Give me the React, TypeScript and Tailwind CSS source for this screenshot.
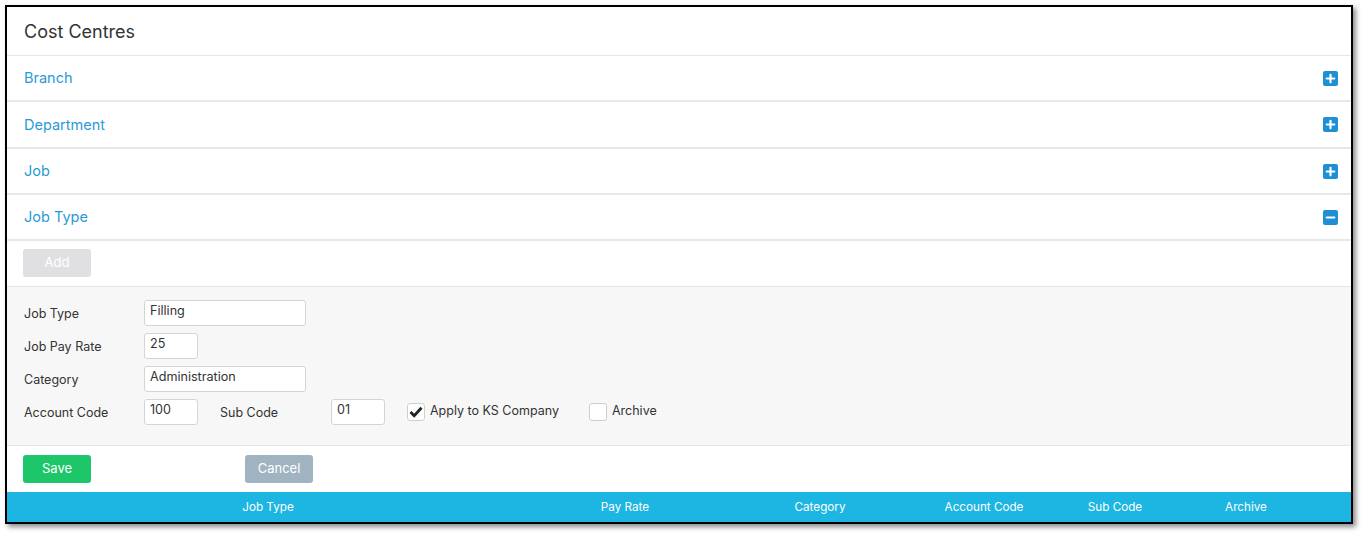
import { Plus, Minus } from 'lucide-react';

const sections = [
  { name: 'Branch', open: false, h: 'h-[46px]' },
  { name: 'Department', open: false, h: 'h-[47px]' },
  { name: 'Job', open: false, h: 'h-[46px]' },
  { name: 'Job Type', open: true, h: 'h-[46px]' },
];

const columns = [
  { label: 'Job Type', w: 'w-[522px]' },
  { label: 'Pay Rate', w: 'w-[192px]' },
  { label: 'Category', w: 'w-[198px]' },
  { label: 'Account Code', w: 'w-[130px]' },
  { label: 'Sub Code', w: 'w-[132px]' },
  { label: 'Archive', w: 'w-[130px]' },
];

function ToggleIcon({ open }: { open: boolean }) {
  return (
    <span className="flex h-[15px] w-[15px] items-center justify-center rounded-[2px] bg-[#1e8fd2] text-white">
      {open ? <Minus size={13} strokeWidth={4} /> : <Plus size={13} strokeWidth={4} />}
    </span>
  );
}

function Input({ value, w }: { value: string; w: string }) {
  return (
    <div className={`${w} flex h-[26px] items-center rounded-[3px] border border-[#d4d4d4] bg-white px-[5px] pb-[3px] text-[12.6px] text-[#333]`}>
      {value}
    </div>
  );
}

function Check({ checked, label }: { checked: boolean; label: string }) {
  return (
    <div className="flex items-center gap-[5px]">
      <span className="flex h-[18px] w-[18px] items-center justify-center rounded-[3px] border border-[#cfcfcf] bg-white">
        {checked && (
          <svg width="14" height="12" viewBox="0 0 14 12">
            <path d="M1.5 6 L5.2 9.7 L12.5 1.8" fill="none" stroke="#222" strokeWidth="2.8" />
          </svg>
        )}
      </span>
      <span className="pb-[1px] text-[12.5px] text-[#333]">{label}</span>
    </div>
  );
}

export default function App() {
  return (
    <div className="min-h-[535px] bg-white pl-[5px] pt-[5px]" style={{ fontFamily: 'Inter, "Noto Sans", sans-serif' }}>
      <div className="w-[1348px] border-2 border-black bg-white shadow-[3px_3px_5px_rgba(0,0,0,0.45)]">
        <div className="flex h-[49px] items-center border-b border-[#e6e6e6] px-[17px] text-[18px] text-[#333]">
          Cost Centres
        </div>
        {sections.map(s => (
          <div key={s.name} className={`${s.h} flex items-center justify-between border-b-2 border-[#e8e8e8] pl-[17px] pr-[13px]`}>
            <span className="text-[14.5px] text-[#2a9ad6]">{s.name}</span>
            <ToggleIcon open={s.open} />
          </div>
        ))}
        <div className="border-b border-[#e6e6e6] px-[16px] pb-[9px] pt-[8px]">
          <button className="h-[28px] w-[68px] rounded-[3px] bg-[#e0e0e2] text-[13px] text-white">Add</button>
        </div>
        <div className="flex flex-col gap-[7px] border-b border-[#e6e6e6] bg-[#f7f7f7] px-[17px] pb-[20px] pt-[13px] text-[12.5px] text-[#333]">
          <div className="flex items-center">
            <span className="w-[120px] pt-[2px]">Job Type</span>
            <Input value="Filling" w="w-[162px]" />
          </div>
          <div className="flex items-center">
            <span className="w-[120px] pt-[2px]">Job Pay Rate</span>
            <Input value="25" w="w-[54px]" />
          </div>
          <div className="flex items-center">
            <span className="w-[120px] pt-[2px]">Category</span>
            <Input value="Administration" w="w-[162px]" />
          </div>
          <div className="flex items-center">
            <span className="w-[120px] pt-[2px]">Account Code</span>
            <Input value="100" w="w-[54px]" />
            <span className="ml-[22px] w-[111px] pt-[2px]">Sub Code</span>
            <Input value="01" w="w-[54px]" />
            <div className="ml-[22px]">
              <Check checked label="Apply to KS Company" />
            </div>
            <div className="ml-[30px]">
              <Check checked={false} label="Archive" />
            </div>
          </div>
        </div>
        <div className="flex gap-[154px] px-[16px] pb-[9px] pt-[9px]">
          <button className="h-[28px] w-[68px] rounded-[3px] bg-[#1ec66a] pb-[1px] text-[13px] text-white">Save</button>
          <button className="h-[28px] w-[68px] rounded-[3px] bg-[#a0b3c0] pb-[1px] text-[13px] text-white">Cancel</button>
        </div>
        <div className="flex h-[30px] items-center bg-[#1db5e1] pt-[1px] text-[11.7px] text-white">
          {columns.map(c => (
            <div key={c.label} className={`${c.w} text-center`}>{c.label}</div>
          ))}
        </div>
      </div>
    </div>
  );
}
